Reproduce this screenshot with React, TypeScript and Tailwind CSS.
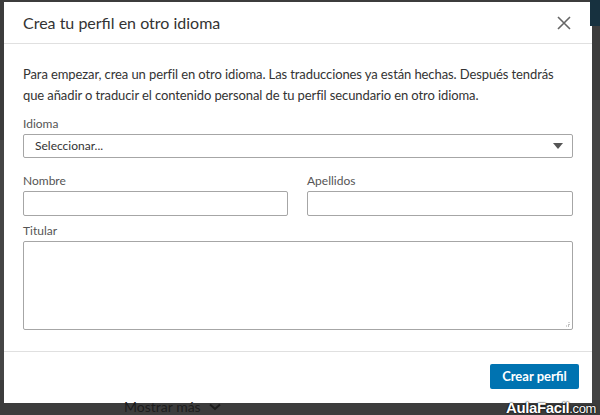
import React from 'react';

const font = { fontFamily: 'Lato, "Noto Sans", sans-serif' };

function Label({ children }: { children: React.ReactNode }) {
  return <div className="h-4 text-[12px] leading-4 text-[#555] mb-[2px]">{children}</div>;
}

export default function App() {
  return (
    <div className="relative w-[600px] h-[415px] bg-[#3c3c3c] overflow-hidden" style={font}>
      {/* page behind the overlay */}
      <div className="absolute right-0 top-0 w-[10px] h-[26px] bg-[#17313f]" />
      <div className="absolute left-0 top-[140px] w-[4px] h-[240px] bg-[#454545]" />
      <div className="absolute right-0 top-[100px] w-[8px] h-[300px] bg-[#444]" />
      <div className="absolute left-[124px] top-[400px] flex items-center gap-2 text-[14px] leading-[14px] text-[#1c1c1c]">
        <span>Mostrar más</span>
        <svg width="12" height="8" viewBox="0 0 12 8"><path d="M1 1.5l5 4.5 5-4.5" fill="none" stroke="#1c1c1c" strokeWidth="2" /></svg>
      </div>
      <div
        className="absolute right-[4px] top-[400px] text-[15px] leading-[15px] font-bold text-white tracking-tight"
        style={{ fontFamily: '"Liberation Sans", Arial, sans-serif', textShadow: '0 0 2px #000, 0 0 1px #000' }}
      >
        AulaFacil<span className="text-[13px] font-normal">.com</span>
      </div>

      <div className="pt-[2px] pl-[4px]">
        <div className="w-[588px] h-[401px] bg-white flex flex-col">
          <div className="h-[42px] border-b border-[#e0e0e0] flex items-center justify-between pl-[19px] pr-[21px]">
            <h2 className="text-[16px] text-[#333] leading-none">Crea tu perfil en otro idioma</h2>
            <svg width="14" height="14" viewBox="0 0 14 14">
              <path d="M1 1l12 12M13 1L1 13" stroke="#666" strokeWidth="1.6" />
            </svg>
          </div>

          <div className="flex-1 px-[19px] pt-[20px] border-b border-[#e0e0e0]">
            <p className="text-[13px] leading-[21px] tracking-[-0.1px] text-[#333] mb-[10px]">
              Para empezar, crea un perfil en otro idioma. Las traducciones ya están hechas. Después tendrás que añadir o traducir el contenido personal de tu perfil secundario en otro idioma.
            </p>

            <Label>Idioma</Label>
            <div className="h-[24px] w-[550px] border border-[#a6a6a6] rounded-[2px] flex items-center justify-between pl-[11px] pr-[9px]">
              <span className="text-[12px] text-[#333]">Seleccionar...</span>
              <svg width="10" height="6" viewBox="0 0 10 6"><path d="M0 0h10L5 6z" fill="#555" /></svg>
            </div>

            <div className="flex gap-[19px] mt-[15px]">
              <div className="w-[265px]">
                <Label>Nombre</Label>
                <div className="h-[25px] border border-[#a6a6a6] rounded-[2px]" />
              </div>
              <div className="w-[266px]">
                <Label>Apellidos</Label>
                <div className="h-[25px] border border-[#a6a6a6] rounded-[2px]" />
              </div>
            </div>

            <div className="mt-[7px]">
              <Label>Titular</Label>
              <div className="relative h-[89px] w-[550px] border border-[#a6a6a6] rounded-[2px]">
                <svg className="absolute right-[2px] bottom-[2px]" width="6" height="6" viewBox="0 0 6 6">
                  <path d="M5 1v4H1M5 3v2H3" fill="none" stroke="#aaa" strokeWidth="1" strokeDasharray="1 1" />
                </svg>
              </div>
            </div>
          </div>

          <div className="h-[51px] flex justify-end items-start pt-[12px] pr-[13px]">
            <button className="h-[25px] w-[89px] bg-[#0073b1] rounded-[2px] text-white text-[13px] font-bold">
              Crear perfil
            </button>
          </div>
        </div>
      </div>
    </div>
  );
}
